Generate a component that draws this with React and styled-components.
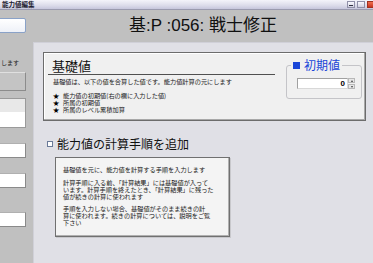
import React from 'react';
import styled, { createGlobalStyle } from 'styled-components';

const GlobalStyle = createGlobalStyle`
  html, body {
    margin: 0;
    padding: 0;
    background: #c0c0c0;
    overflow: hidden;
  }
  body {
    font-family: 'Liberation Sans', 'Noto Sans CJK JP', sans-serif;
  }
`;

const jp = `'Noto Sans CJK JP', 'Liberation Sans', sans-serif`;

const Window = styled.div`
  width: 373px;
  height: 263px;
  display: flex;
  flex-direction: column;
  background: #c0c0c0;
  overflow: hidden;
`;

const TitleBar = styled.div`
  height: 10px;
  box-sizing: border-box;
  display: flex;
  align-items: flex-start;
  justify-content: space-between;
  padding-left: 2px;
  background: linear-gradient(#f4f4fa, #dcdcea 60%, #c6c6dc);
  border-bottom: 1px solid #9a9aae;
`;

const TitleText = styled.span`
  font-family: ${jp};
  font-size: 6.5px;
  line-height: 9px;
  font-weight: bold;
  color: #202030;
`;

const WinButtons = styled.div`
  display: flex;
  gap: 2px;
  margin-top: 1px;
  margin-right: -2px;
`;

const WinButton = styled.div`
  width: 8px;
  height: 7px;
  box-sizing: border-box;
  border: 1px solid ${p => (p.$close ? '#a03020' : '#9090a8')};
  background: ${p => (p.$close ? 'linear-gradient(#f07050, #c83420)' : 'linear-gradient(#fafaff, #d0d0e0)')};
  display: flex;
  align-items: flex-end;
  justify-content: center;
`;

const MinBar = styled.span`
  width: 4px;
  height: 1px;
  margin-bottom: 1px;
  background: #303040;
`;

const Body = styled.div`
  flex: 1;
  display: flex;
  min-height: 0;
`;

const LeftCol = styled.div`
  width: 33px;
  flex-shrink: 0;
  display: flex;
  flex-direction: column;
  padding-top: 8px;
  overflow: hidden;
`;

const RoundInput = styled.div`
  margin-left: -12px;
  width: 38px;
  height: 15px;
  box-sizing: border-box;
  border: 1px solid #8aa2c8;
  border-radius: 2px;
  background: linear-gradient(#ffffff, #eef1f8);
`;

const LeftLabel = styled.div`
  margin-top: 26px;
  width: 19px;
  text-align: right;
  white-space: nowrap;
  font-family: ${jp};
  font-size: 6px;
  line-height: 7px;
  color: #202020;
`;

const LeftButton = styled.div`
  margin-top: 6px;
  margin-left: -12px;
  width: 38px;
  height: 19px;
  box-sizing: border-box;
  background: #c4c4c4;
  border: 1px solid #8c8c8c;
  border-top-color: #e0e0e0;
  border-left-color: #e0e0e0;
`;

const LeftPanel = styled.div`
  margin-top: 7px;
  margin-left: -12px;
  width: 38px;
  height: 30px;
  box-sizing: border-box;
  border: 1px solid #9a9a9a;
  background: linear-gradient(#e8e8e8 0 13px, #ffffff 13px);
`;

const LeftInput = styled.div`
  margin-top: ${p => p.$top}px;
  margin-left: -12px;
  width: 38px;
  height: 15px;
  box-sizing: border-box;
  background: #ffffff;
  border: 1px solid #b0b0b0;
  border-right-color: #8a8a8a;
  border-bottom-color: #8a8a8a;
`;

const Main = styled.div`
  flex: 1;
  display: flex;
  flex-direction: column;
  min-width: 0;
`;

const Header = styled.div`
  height: 32px;
  flex-shrink: 0;
  display: flex;
  align-items: center;
  justify-content: center;
  font-family: 'Liberation Sans', 'Noto Sans CJK JP', sans-serif;
  font-size: 17px;
  line-height: 20px;
  color: #101010;
  white-space: pre;
`;

const Content = styled.div`
  flex: 1;
  background: #e0e0e6;
  border-top: 1px solid #d0d0d8;
  border-left: 1px solid #d0d0d8;
  padding: 9px 7px 0 9px;
  display: flex;
  flex-direction: column;
`;

const BaseBox = styled.div`
  height: 69px;
  box-sizing: border-box;
  background: #f0f0f0;
  border: 1px solid #6c6c6c;
  box-shadow: inset -1px -1px #a8a8a8, inset 1px 1px #ffffff;
  display: flex;
  padding: 5px 2px 0 4px;
`;

const BaseLeft = styled.div`
  width: 227px;
  display: flex;
  flex-direction: column;
`;

const BaseHeading = styled.div`
  font-family: ${jp};
  font-size: 13px;
  line-height: 15px;
  padding: 0 0 1px 4px;
  border-bottom: 1px solid #505050;
  color: #101010;
`;

const SmallText = styled.div`
  font-family: ${jp};
  font-size: 6.2px;
  line-height: 7px;
  color: #202020;
  white-space: nowrap;
`;

const BaseDesc = styled(SmallText)`
  margin: 3px 0 0 5px;
`;

const StarList = styled.ul`
  list-style: none;
  margin: 7px 0 0 5px;
  padding: 0;
`;

const StarItem = styled(SmallText).attrs({ as: 'li' })`
  display: flex;
  gap: 4px;
`;

const Star = styled.span`
  width: 6px;
  color: #000;
`;

const InitGroup = styled.fieldset`
  margin: 0 0 0 11px;
  width: 76px;
  height: 41px;
  box-sizing: border-box;
  padding: 0 0 0 10px;
  border: 1px solid #c4c4c8;
  border-radius: 3px;
  min-width: 0;
`;

const InitLegend = styled.legend`
  margin-left: -6px;
  padding: 0 2px;
  display: flex;
  align-items: center;
  gap: 4px;
  font-family: ${jp};
  font-size: 12px;
  line-height: 14px;
  color: #1a46d8;
`;

const BlueSquare = styled.span`
  width: 7px;
  height: 7px;
  background: #1a46d8;
`;

const SpinRow = styled.div`
  margin-top: 6px;
  display: flex;
  align-items: stretch;
  height: 11px;
`;

const SpinInput = styled.div`
  width: 51px;
  box-sizing: border-box;
  background: #ffffff;
  border: 1px solid #a0a0a0;
  border-bottom-color: #d8d8d8;
  border-right-color: #d8d8d8;
  text-align: right;
  padding-right: 2px;
  font-family: 'Liberation Sans', sans-serif;
  font-size: 8px;
  line-height: 9px;
  font-weight: bold;
  color: #000;
`;

const SpinButtons = styled.div`
  width: 7px;
  display: flex;
  flex-direction: column;
  gap: 1px;
`;

const SpinButton = styled.div`
  flex: 1;
  background: #e6e6e6;
  border: 1px solid #b8b8b8;
  box-sizing: border-box;
  display: flex;
  align-items: center;
  justify-content: center;

  &::after {
    content: '';
    border-left: 1.5px solid transparent;
    border-right: 1.5px solid transparent;
    ${p => (p.$down ? 'border-top: 2px solid #404040;' : 'border-bottom: 2px solid #404040;')}
  }
`;

const AddRow = styled.div`
  margin: 16px 0 0 4px;
  display: flex;
  align-items: center;
  gap: 4px;
  height: 14px;
`;

const CheckBox = styled.span`
  width: 6px;
  height: 6px;
  box-sizing: border-box;
  border: 1px solid #6a7a98;
  background: #ffffff;
`;

const AddLabel = styled.span`
  font-family: ${jp};
  font-size: 12px;
  line-height: 14px;
  color: #101010;
`;

const HelpBox = styled.div`
  margin: 6px 0 0 12px;
  width: 175px;
  height: 80px;
  box-sizing: border-box;
  background: #f4f4f4;
  border: 1px solid #707070;
  box-shadow: inset -1px -1px #b0b0b0, 1px 1px #c8c8cc;
  padding: 8px 0 0 7px;
`;

const HelpPara = styled(SmallText)`
  margin-top: ${p => (p.$first ? 0 : 5.5)}px;
`;

export default function App() {
  return (
    <Window>
      <GlobalStyle />
      <TitleBar>
        <TitleText>能力値編集</TitleText>
        <WinButtons>
          <WinButton><MinBar /></WinButton>
          <WinButton />
          <WinButton $close />
        </WinButtons>
      </TitleBar>
      <Body>
        <LeftCol>
          <RoundInput />
          <LeftLabel>します</LeftLabel>
          <LeftButton />
          <LeftPanel />
          <LeftInput $top={15} />
          <LeftInput $top={15} />
          <LeftInput $top={24} />
        </LeftCol>
        <Main>
          <Header>基:P :056: 戦士修正</Header>
          <Content>
            <BaseBox>
              <BaseLeft>
                <BaseHeading>基礎値</BaseHeading>
                <BaseDesc>基礎値は、以下の値を合算した値です。能力値計算の元にします</BaseDesc>
                <StarList>
                  <StarItem><Star>★</Star>能力値の初期値(右の欄に入力した値)</StarItem>
                  <StarItem><Star>★</Star>所属の初期値</StarItem>
                  <StarItem><Star>★</Star>所属のレベル累積加算</StarItem>
                </StarList>
              </BaseLeft>
              <InitGroup>
                <InitLegend><BlueSquare />初期値</InitLegend>
                <SpinRow>
                  <SpinInput>0</SpinInput>
                  <SpinButtons>
                    <SpinButton />
                    <SpinButton $down />
                  </SpinButtons>
                </SpinRow>
              </InitGroup>
            </BaseBox>
            <AddRow>
              <CheckBox />
              <AddLabel>能力値の計算手順を追加</AddLabel>
            </AddRow>
            <HelpBox>
              <HelpPara $first>基礎値を元に、能力値を計算する手順を入力します</HelpPara>
              <HelpPara>
                計算手順に入る前、「計算結果」には基礎値が入って<br />
                います。計算手順を終えたとき、「計算結果」に残った<br />
                値が続きの計算に使われます
              </HelpPara>
              <HelpPara>
                手順を入力しない場合、基礎値がそのまま続きの計<br />
                算に使われます。続きの計算については、説明をご覧<br />
                下さい
              </HelpPara>
            </HelpBox>
          </Content>
        </Main>
      </Body>
    </Window>
  );
}
